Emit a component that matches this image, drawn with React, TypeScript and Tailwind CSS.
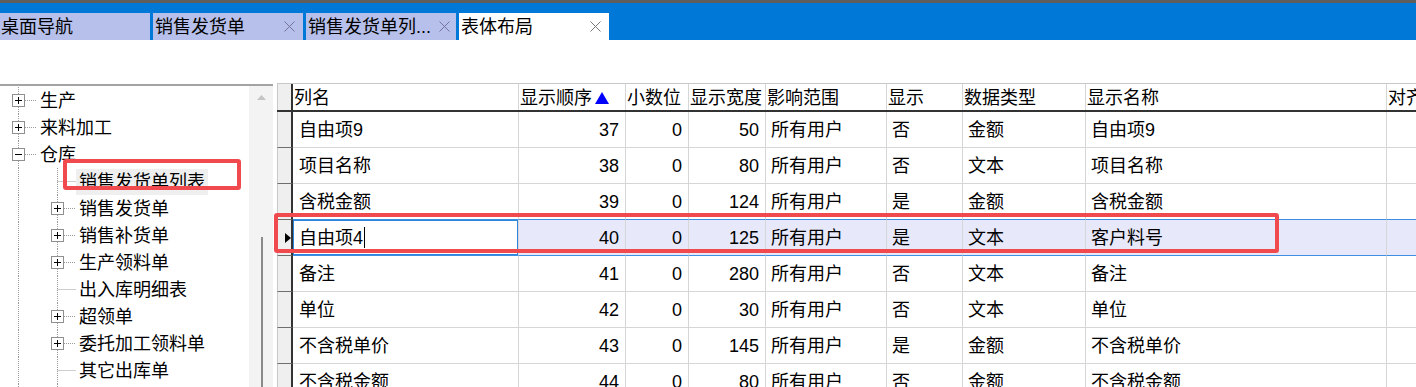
import React from "react";

type Kind = "plus" | "minus" | "leaf";
type TreeItem = { label: string; level: 0 | 1; kind: Kind; selected?: boolean };

const tree: TreeItem[] = [
  { label: "生产", level: 0, kind: "plus" },
  { label: "来料加工", level: 0, kind: "plus" },
  { label: "仓库", level: 0, kind: "minus" },
  { label: "销售发货单列表", level: 1, kind: "leaf", selected: true },
  { label: "销售发货单", level: 1, kind: "plus" },
  { label: "销售补货单", level: 1, kind: "plus" },
  { label: "生产领料单", level: 1, kind: "plus" },
  { label: "出入库明细表", level: 1, kind: "leaf" },
  { label: "超领单", level: 1, kind: "plus" },
  { label: "委托加工领料单", level: 1, kind: "plus" },
  { label: "其它出库单", level: 1, kind: "leaf" },
  { label: "其它入库单", level: 1, kind: "leaf" },
];

function Connector({ level, kind }: { level: 0 | 1; kind: Kind }) {
  const w = level === 0 ? 37 : 76;
  const boxX = level === 0 ? 12 : 51;
  const lineX = boxX + 6.5;
  const dot = { stroke: "#9a9a9a", strokeWidth: 1, strokeDasharray: "1 1" };
  return (
    <svg width={w} height={27} className="shrink-0 block">
      <line x1={18.5} y1={0} x2={18.5} y2={27} {...dot} />
      {level === 1 && <line x1={57.5} y1={0} x2={57.5} y2={27} {...dot} />}
      <line x1={kind === "leaf" ? lineX : boxX + 13} y1={13.5} x2={w} y2={13.5} {...dot} />
      {kind !== "leaf" && (
        <>
          <rect x={boxX + 0.5} y={7.5} width={12} height={12} fill="#fff" stroke="#8f8f8f" />
          <line x1={boxX + 3} y1={13.5} x2={boxX + 10} y2={13.5} stroke="#000" />
          {kind === "plus" && <line x1={boxX + 6.5} y1={10} x2={boxX + 6.5} y2={17} stroke="#000" />}
        </>
      )}
    </svg>
  );
}

function CloseX({ color }: { color: string }) {
  return (
    <svg width="11" height="11" viewBox="0 0 11 11" className="shrink-0">
      <path d="M0.5 0.5 L10.5 10.5 M10.5 0.5 L0.5 10.5" stroke={color} strokeWidth="1" />
    </svg>
  );
}

type Col = { label: string; w: string; right: boolean; sort?: boolean };
const cols: Col[] = [
  { label: "列名", w: "w-[226px]", right: false },
  { label: "显示顺序", w: "w-[107px]", right: true, sort: true },
  { label: "小数位", w: "w-[63px]", right: true },
  { label: "显示宽度", w: "w-[77px]", right: true },
  { label: "影响范围", w: "w-[121px]", right: false },
  { label: "显示", w: "w-[76px]", right: false },
  { label: "数据类型", w: "w-[123px]", right: false },
  { label: "显示名称", w: "w-[301px]", right: false },
  { label: "对齐", w: "w-[200px]", right: false },
];

const rows: string[][] = [
  ["自由项9", "37", "0", "50", "所有用户", "否", "金额", "自由项9", ""],
  ["项目名称", "38", "0", "80", "所有用户", "否", "文本", "项目名称", ""],
  ["含税金额", "39", "0", "124", "所有用户", "是", "金额", "含税金额", ""],
  ["自由项4", "40", "0", "125", "所有用户", "是", "文本", "客户料号", ""],
  ["备注", "41", "0", "280", "所有用户", "否", "文本", "备注", ""],
  ["单位", "42", "0", "30", "所有用户", "否", "文本", "单位", ""],
  ["不含税单价", "43", "0", "145", "所有用户", "是", "金额", "不含税单价", ""],
  ["不含税金额", "44", "0", "80", "所有用户", "否", "金额", "不含税金额", ""],
];

const SEL = 3;

export default function App() {
  return (
    <div className="relative w-[1416px] h-[387px] overflow-hidden bg-white text-black text-[18px] leading-[24px] font-['Liberation_Sans','Noto_Sans_CJK_SC',sans-serif]">
      {/* Tab bar */}
      <div className="h-[40px] bg-[#0078d7] border-t-[3px] border-[#5e5e5e] flex items-end gap-[3px]">
        <div className="w-[150px] h-[27px] bg-[#b6c0ea] flex items-center pl-[1px]">
          <span>桌面导航</span>
        </div>
        <div className="w-[150px] h-[27px] bg-[#b6c0ea] flex items-center justify-between pl-[2px] pr-[8px]">
          <span>销售发货单</span>
          <CloseX color="#74749a" />
        </div>
        <div className="w-[150px] h-[27px] bg-[#b6c0ea] flex items-center justify-between pl-[2px] pr-[6px]">
          <span>销售发货单列...</span>
          <CloseX color="#74749a" />
        </div>
        <div className="w-[150px] h-[27px] bg-white flex items-center justify-between pl-[2px] pr-[8px]">
          <span>表体布局</span>
          <CloseX color="#7a7a7a" />
        </div>
      </div>

      {/* white spacer */}
      <div className="h-[43px]" />

      {/* Main */}
      <div className="flex gap-[4px] h-[304px]">
        {/* Tree panel */}
        <div className="w-[273px] shrink-0 pt-[1px]">
          <div className="border-t-2 border-[#a3a3a3] flex h-full">
            <div className="w-[249px] pt-[1px] overflow-hidden">
              {tree.map((t, i) => (
                <div key={i} className="h-[27px] flex items-center whitespace-nowrap">
                  <Connector level={t.level} kind={t.kind} />
                  <span
                    className={
                      t.selected
                        ? "h-[26px] flex items-center px-[3px] bg-[#efefef]"
                        : "h-[26px] flex items-center px-[3px]"
                    }
                  >
                    {t.label}
                  </span>
                </div>
              ))}
            </div>
            <div className="w-[24px] bg-[#f3f3f3] flex flex-col items-center">
              <svg width="9" height="5" className="mt-[9px] ml-[1px]">
                <polygon points="4.5,0 9,5 0,5" fill="#c4c4c4" />
              </svg>
              <div className="w-[2px] ml-[1px] mt-[137px] flex-1 bg-[#8a8a8a]" />
            </div>
          </div>
        </div>

        {/* Grid */}
        <div className="flex-1 overflow-hidden border-t border-[#c8c8c8]">
          {/* Header */}
          <div className="flex h-[28px] border-b-2 border-[#333333] whitespace-nowrap">
            <div className="w-[16px] shrink-0 h-full bg-[#efefef] border-r-2 border-[#333333] border-l border-l-[#c8c8c8]" />
            {cols.map((c, i) => (
              <div
                key={i}
                className={`${c.w} shrink-0 h-full border-r border-[#d6d6d6] flex items-center pl-[1px] pt-[2px] overflow-hidden`}
              >
                <span>{c.label}</span>
                {c.sort && (
                  <svg width="14" height="12" className="ml-[3px] shrink-0">
                    <polygon points="7,0 14,12 0,12" fill="#0000ff" />
                  </svg>
                )}
              </div>
            ))}
          </div>
          {/* Rows */}
          {rows.map((r, ri) => {
            const sel = ri === SEL;
            const blueBottom = ri === SEL || ri === SEL - 1;
            return (
              <div key={ri} className={sel ? "flex h-[36px] bg-[#e7e8f9] whitespace-nowrap" : "flex h-[36px] whitespace-nowrap"}>
                <div className="w-[16px] shrink-0 h-full bg-[#efefef] border-r-2 border-[#333333] border-b border-b-[#6e6e6e] border-l border-l-[#c8c8c8] flex items-center justify-end">
                  {sel && (
                    <svg width="6" height="10" className="shrink-0">
                      <polygon points="0,0 6,5 0,10" fill="#000" />
                    </svg>
                  )}
                </div>
                {cols.map((c, ci) => {
                  const edit = sel && ci === 0;
                  const base = `${c.w} shrink-0 h-full border-r border-[#d6d6d6] border-b flex items-center overflow-hidden`;
                  const bcol = blueBottom ? "border-b-[#3d8ee0]" : "border-b-[#d6d6d6]";
                  const al = c.right ? "justify-end pr-[6px]" : ci === 0 ? "pl-[6px]" : "pl-[5px]";
                  const ed = edit ? "bg-white shadow-[inset_0_0_0_1px_#2f84dc]" : "";
                  return (
                    <div key={ci} className={`${base} ${bcol} ${al} ${ed}`}>
                      <span>{r[ci]}</span>
                      {edit && <span className="inline-block w-[1px] h-[21px] bg-black ml-[1px]" />}
                    </div>
                  );
                })}
              </div>
            );
          })}
        </div>
      </div>

      {/* Annotation boxes */}
      <div className="absolute left-[63px] top-[159px] w-[178px] h-[31px] border-4 border-[#f04a4e] rounded-[3px] pointer-events-none" />
      <div className="absolute left-[274px] top-[213px] w-[1005px] h-[40px] border-4 border-[#f04a4e] rounded-[3px] pointer-events-none" />
    </div>
  );
}
